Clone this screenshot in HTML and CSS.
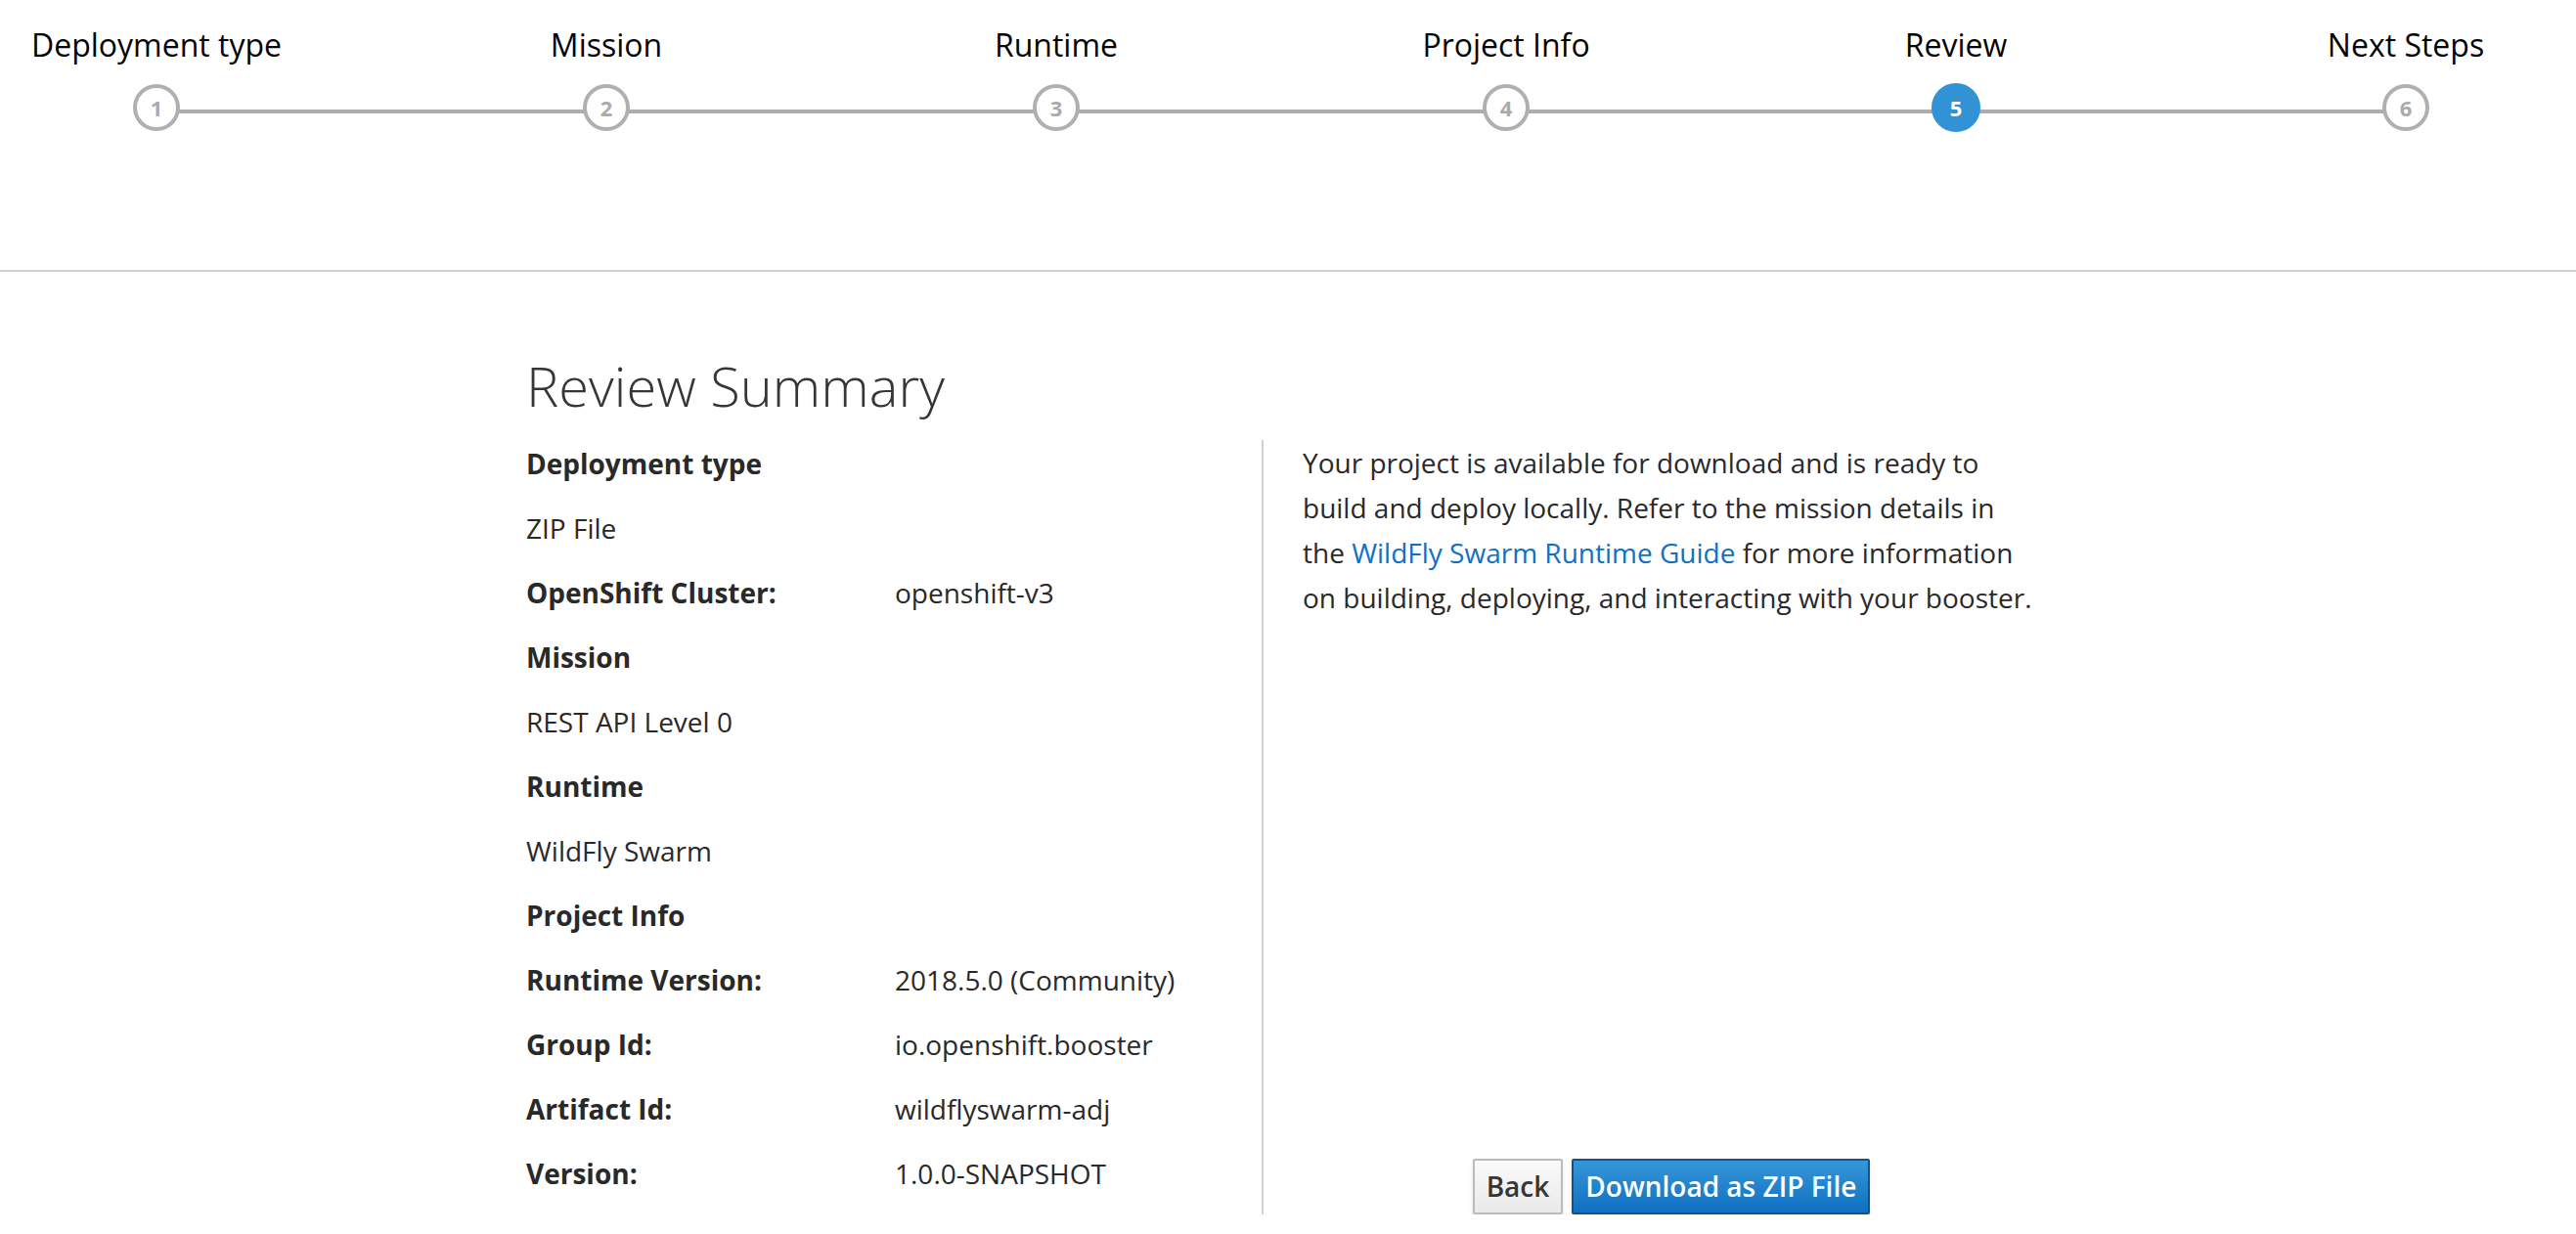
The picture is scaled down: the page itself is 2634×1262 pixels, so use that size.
FILE: index.html
```html
<!DOCTYPE html>
<html lang="en">
<head>
<meta charset="utf-8">
<title>Review Summary</title>
<link rel="stylesheet" href="styles.css">
</head>
<body>
<header class="wizard-header">
  <ol class="steps">
    <li class="step"><span class="step-label">Deployment type</span><span class="step-num">1</span></li>
    <li class="step"><span class="step-label">Mission</span><span class="step-num">2</span></li>
    <li class="step"><span class="step-label">Runtime</span><span class="step-num">3</span></li>
    <li class="step"><span class="step-label">Project Info</span><span class="step-num">4</span></li>
    <li class="step is-active"><span class="step-label">Review</span><span class="step-num">5</span></li>
    <li class="step"><span class="step-label">Next Steps</span><span class="step-num">6</span></li>
  </ol>
</header>
<main class="review">
  <h1 class="review-title">Review Summary</h1>
  <div class="review-body">
    <div class="summary">
      <div class="row"><span class="label">Deployment type</span></div>
      <div class="row"><span class="value">ZIP File</span></div>
      <div class="row"><span class="label">OpenShift Cluster:</span><span class="value">openshift-v3</span></div>
      <div class="row"><span class="label">Mission</span></div>
      <div class="row"><span class="value">REST API Level 0</span></div>
      <div class="row"><span class="label">Runtime</span></div>
      <div class="row"><span class="value">WildFly Swarm</span></div>
      <div class="row"><span class="label">Project Info</span></div>
      <div class="row"><span class="label">Runtime Version:</span><span class="value">2018.5.0 (Community)</span></div>
      <div class="row"><span class="label">Group Id:</span><span class="value">io.openshift.booster</span></div>
      <div class="row"><span class="label">Artifact Id:</span><span class="value">wildflyswarm-adj</span></div>
      <div class="row"><span class="label">Version:</span><span class="value">1.0.0-SNAPSHOT</span></div>
    </div>
    <div class="details">
      <p class="details-text">Your project is available for download and is ready to build and deploy locally. Refer to the mission details in the <a href="#" class="link">WildFly Swarm Runtime Guide</a> for more information on building, deploying, and interacting with your booster.</p>
      <div class="actions">
        <button class="btn btn-default" type="button">Back</button>
        <button class="btn btn-primary" type="button">Download as ZIP File</button>
      </div>
    </div>
  </div>
</main>
</body>
</html>
```
FILE: styles.css
```css
* { box-sizing: border-box; }

body {
  margin: 0;
  background: #fff;
  font-family: "Open Sans", "Liberation Sans", sans-serif;
  color: #363636;
}

/* ---------- wizard steps header ---------- */
.wizard-header {
  height: 278px;
  border-bottom: 2px solid #d1d1d1;
}

.steps {
  position: relative;
  list-style: none;
  margin: 0;
  padding: 24px 0 0;
  display: grid;
  grid-template-columns: repeat(6, 320px);
  column-gap: 140px;
}

.steps::before {
  content: "";
  position: absolute;
  left: 160px;
  width: 2301px;
  top: 112px;
  height: 4px;
  background: #adadad;
}

.step {
  display: flex;
  flex-direction: column;
  align-items: center;
}

.step-label {
  font-size: 32px;
  line-height: 44px;
  color: #030303;
  white-space: nowrap;
}

.step-num {
  position: relative;
  z-index: 1;
  margin-top: 18px;
  width: 48px;
  height: 48px;
  border: 4px solid #b0b0b0;
  border-radius: 50%;
  background: #fff;
  color: #aaa;
  font-size: 22px;
  font-weight: 700;
  display: flex;
  align-items: center;
  justify-content: center;
}

.step.is-active .step-num {
  width: 50px;
  height: 50px;
  margin-top: 17px;
  border-color: #3193d6;
  background: #3193d6;
  color: #fff;
}

/* ---------- review content ---------- */
.review {
  width: 1558px;
  margin: 0 auto;
  padding-top: 78px;
}

.review-title {
  margin: 0 0 18px;
  font-size: 56px;
  font-weight: 300;
  line-height: 76px;
  color: #363636;
}

.review-body {
  display: grid;
  grid-template-columns: 754px 1fr;
}

.summary {
  border-right: 2px solid #d1d1d1;
}

.row {
  display: grid;
  grid-template-columns: 377px 1fr;
  height: 66px;
  font-size: 28px;
  line-height: 48px;
}

.label {
  font-weight: 700;
  color: #292929;
  white-space: nowrap;
}

.value {
  color: #292929;
  white-space: nowrap;
}

.details {
  display: flex;
  flex-direction: column;
  padding-left: 40px;
  width: 794px;
}

.details-text {
  margin: 0;
  font-size: 28px;
  line-height: 46px;
  color: #292929;
}

.link {
  color: #0f70c6;
  text-decoration: none;
}

.actions {
  margin-top: auto;
  display: flex;
  justify-content: center;
  gap: 9px;
}

.btn {
  font-family: inherit;
  font-size: 28px;
  font-weight: 600;
  line-height: 45px;
  padding: 4px 12px;
  border-radius: 2px;
  box-shadow: 0 2px 4px rgba(0, 0, 0, 0.12);
  cursor: pointer;
}

.btn-default {
  color: #363636;
  background: linear-gradient(#fafafa, #e9e9e9);
  border: 2px solid #bbb;
}

.btn-primary {
  color: #fff;
  background: linear-gradient(#3597da, #0f6fc0);
  border: 2px solid #0b5596;
}
```
